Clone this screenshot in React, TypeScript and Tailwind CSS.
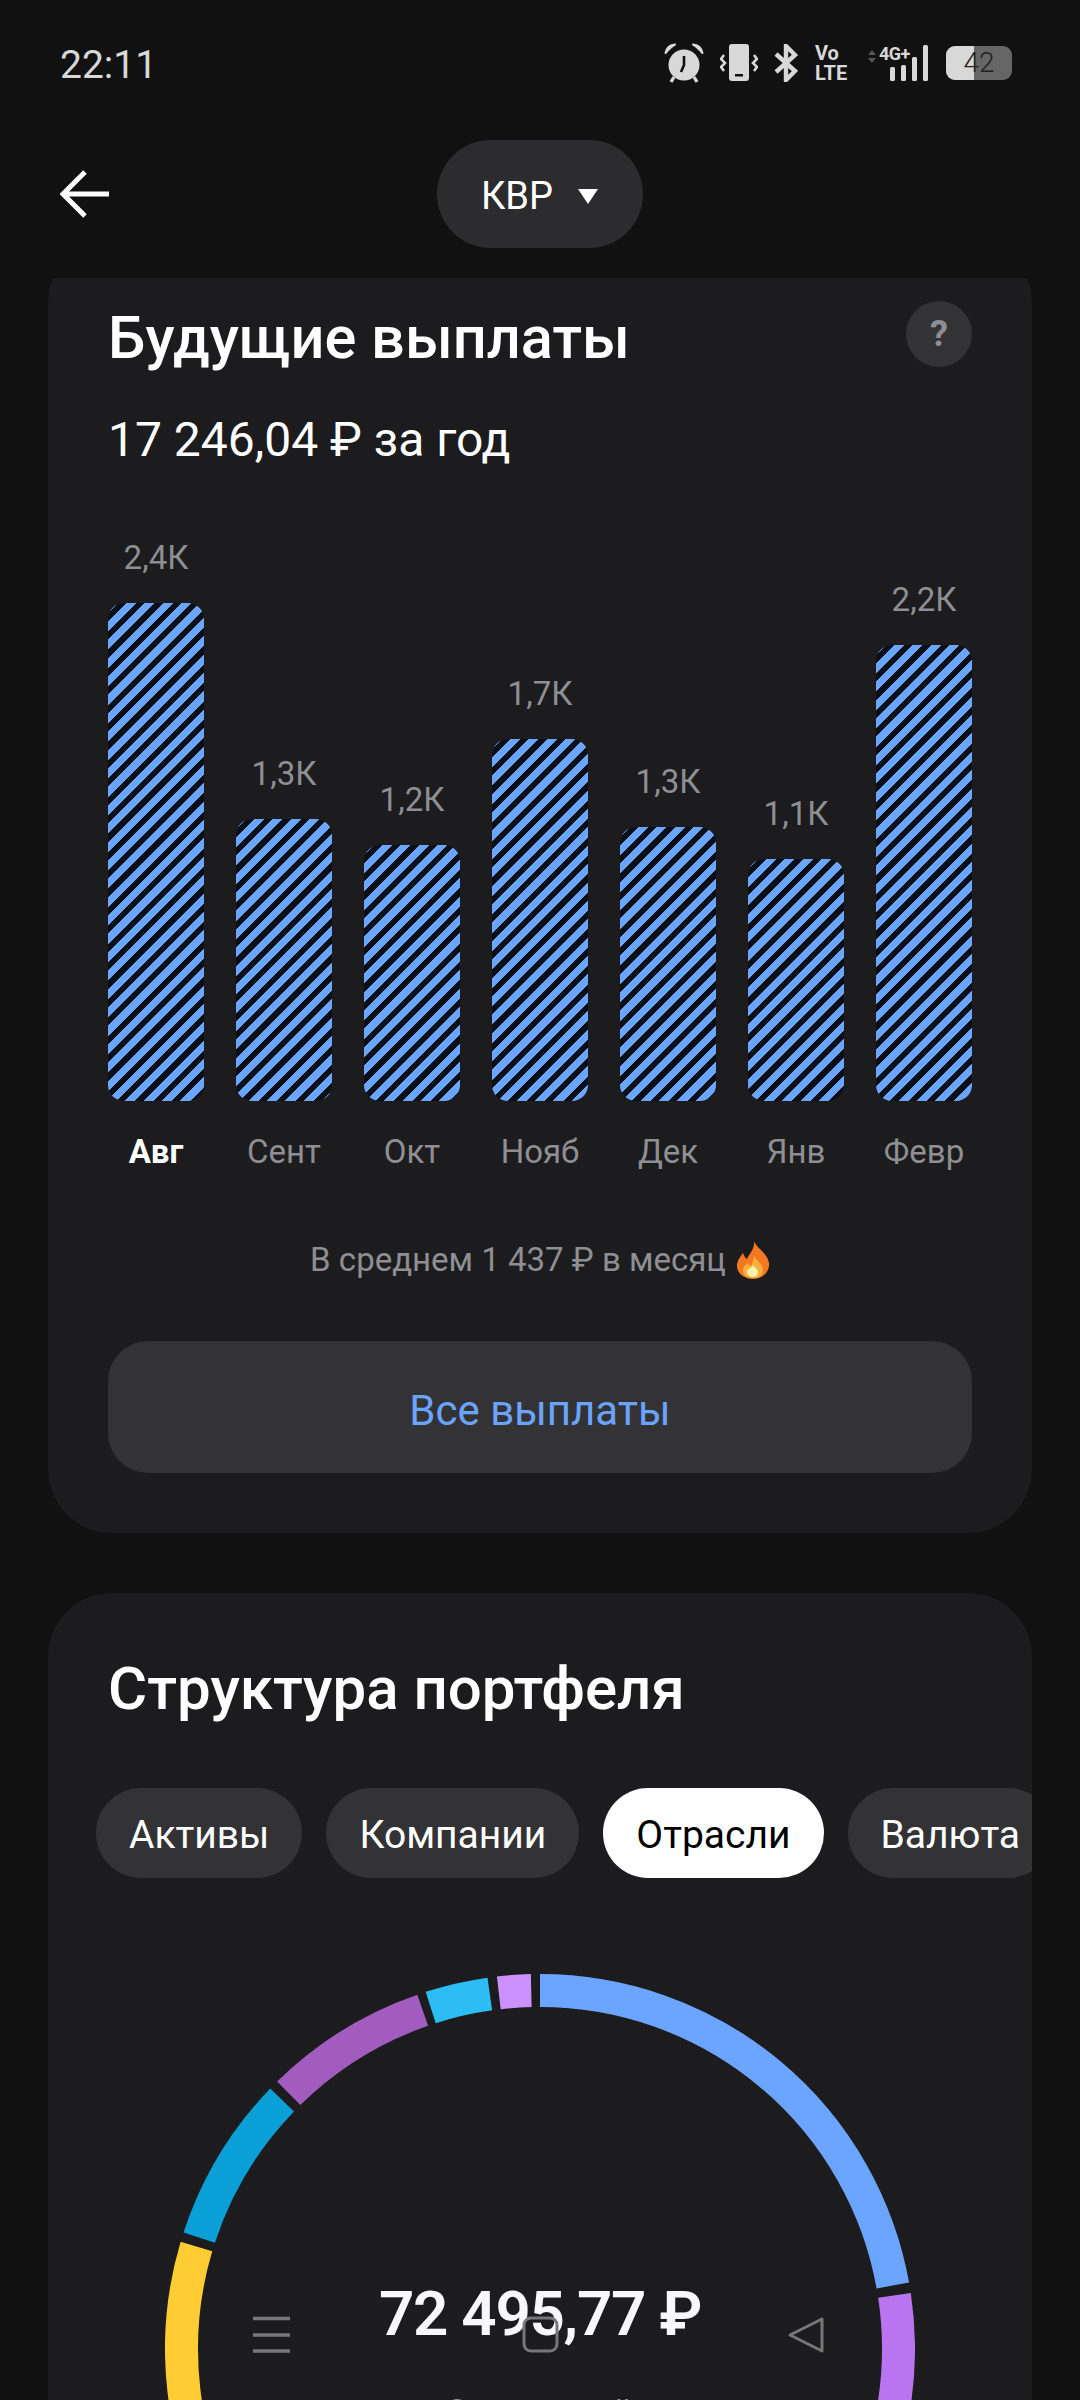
const payouts = [
  { month: "Авг", label: "2,4К", height: 498, active: true },
  { month: "Сент", label: "1,3К", height: 282 },
  { month: "Окт", label: "1,2К", height: 256 },
  { month: "Нояб", label: "1,7К", height: 362 },
  { month: "Дек", label: "1,3К", height: 274 },
  { month: "Янв", label: "1,1К", height: 242 },
  { month: "Февр", label: "2,2К", height: 456 },
];

const tabs = ["Активы", "Компании", "Отрасли", "Валюта"];

const segments = [
  { from: 0, to: 79.8, color: "#6ba5ff" },
  { from: 81.4, to: 120, color: "#bb74f0" },
  { from: -120, to: -73.4, color: "#ffcc33" },
  { from: -71.9, to: -46, color: "#0b9fd8" },
  { from: -44.5, to: -19.1, color: "#a25cc0" },
  { from: -17.75, to: -8.05, color: "#2dbdf5" },
  { from: -6.6, to: -1.4, color: "#cc90ff" },
];

function arcPath(from: number, to: number) {
  const r = 358.5;
  const point = (deg: number) => {
    const rad = (deg * Math.PI) / 180;
    return `${375 + r * Math.sin(rad)} ${375 - r * Math.cos(rad)}`;
  };
  return `M ${point(from)} A ${r} ${r} 0 ${to - from > 180 ? 1 : 0} 1 ${point(to)}`;
}

function StatusIcons() {
  return (
    <div className="flex items-center text-[#d8d8d8]">
      <svg width="40" height="40" viewBox="0 0 40 40" className="mr-[16px]" fill="none">
        <circle cx="20" cy="22" r="15.5" fill="#d8d8d8" />
        <path d="M20 13v9l-3 7" stroke="#111112" strokeWidth="2.6" />
        <path d="M1.5 10C2 5 6 1.5 11 1.5 8 3 4.5 6.5 1.5 10zM38.5 10C38 5 34 1.5 29 1.5 32 3 35.5 6.5 38.5 10z" fill="#d8d8d8" stroke="#d8d8d8" strokeWidth="2" strokeLinejoin="round" />
        <path d="M10 34l-3 5M30 34l3 5" stroke="#d8d8d8" strokeWidth="3.4" />
      </svg>
      <svg width="38" height="38" viewBox="0 0 38 38" className="mr-[16px]" fill="none">
        <rect x="9" y="0" width="20" height="37" rx="3" fill="#d8d8d8" />
        <rect x="15" y="30" width="8" height="2.5" fill="#111112" />
        <path d="M4 11l-3 4 4 4-4 4 3 4M34 11l3 4-4 4 4 4-3 4" stroke="#d8d8d8" strokeWidth="2.6" />
      </svg>
      <svg width="24" height="38" viewBox="0 0 24 38" className="mr-[17px]" fill="none">
        <path d="M2 10 21 27 12 36V2l9 9L2 28" stroke="#d8d8d8" strokeWidth="4.4" />
      </svg>
      <div className="mr-[17px] flex w-[35px] flex-col text-[20px] leading-[20px] font-bold">
        <span>Vo</span>
        <span>LTE</span>
      </div>
      <div className="relative mr-[16px] h-[38px] w-[63px]">
        <svg width="63" height="38" viewBox="0 0 63 38" fill="none">
          <path d="M1 11 5 6l4 5zM1 14h8l-4 5z" fill="#555" />
          <rect x="23" y="23" width="5" height="14" rx="1.5" fill="#d8d8d8" />
          <rect x="34" y="21" width="5" height="16" rx="1.5" fill="#d8d8d8" />
          <rect x="45" y="13" width="5" height="24" rx="1.5" fill="#d8d8d8" />
          <rect x="56" y="1" width="5" height="36" rx="1.5" fill="#d8d8d8" />
        </svg>
        <span className="absolute left-[12px] top-[1px] text-[18px] leading-[18px] font-bold tracking-[-0.5px]">
          4G+
        </span>
      </div>
      <div className="relative flex h-[34px] w-[66px] items-center justify-center overflow-hidden rounded-[9px] bg-[#666]">
        <div className="absolute inset-y-0 left-0 w-[28px] bg-[#d8d8d8]" />
        <span className="relative text-[28px] leading-none font-light text-[#222]">42</span>
      </div>
    </div>
  );
}

function Flame() {
  return (
    <svg width="34" height="38" viewBox="0 0 34 38" className="ml-[10px]">
      <path
        d="M18 0c2 7 13 11 15 22 1 9-7 16-16 16S0 32 1 23c1-5 4-8 6-11 1 3 2 5 4 6 2-5 8-10 7-18z"
        fill="#f4781f"
      />
      <path d="M18 14c1 5 9 8 9 16 0 4-4 7-10 7s-10-3-10-7c0-4 2-6 5-8 1 2 2 2 3 3 1-3 3-6 3-11z" fill="#fbb03b" />
      <path d="M17 24c1 2 5 4 5 7 0 3-2 5-5 5s-6-2-6-5c0-3 5-4 6-7z" fill="#fff0b0" />
    </svg>
  );
}

function PayoutsCard() {
  return (
    <section className="-mt-[39px] rounded-[64px] bg-[#1c1c1e] px-[60px] pb-[60px] pt-[61px]">
      <div className="flex items-start justify-between">
        <h2 className="text-[59.5px] leading-[76px] font-medium text-white">Будущие выплаты</h2>
        <div className="mt-[1px] grid size-[66px] place-items-center rounded-full bg-[#333335] text-[36px] font-bold text-[#8e8e93]">
          ?
        </div>
      </div>
      <p className="mt-[34px] text-[48px] leading-[60px] text-white">17 246,04 ₽ за год</p>

      <div className="flex h-[631px] items-end justify-between">
        {payouts.map((item) => (
          <div key={item.month} className="flex w-[96px] flex-col items-center">
            <span className="mb-[25px] whitespace-nowrap text-[33px] leading-[40px] text-[#8e8e93]">
              {item.label}
            </span>
            <div
              className="w-full rounded-[16px] bg-[repeating-linear-gradient(135deg,#6aa5ff_0,#6aa5ff_7.2px,#0a0f18_7.2px,#0a0f18_13px)]"
              style={{ height: item.height }}
            />
          </div>
        ))}
      </div>

      <div className="mt-[31px] flex justify-between">
        {payouts.map((item) => (
          <span
            key={item.month}
            className={
              item.active
                ? "w-[96px] text-center text-[33px] leading-[40px] font-bold text-white"
                : "w-[96px] text-center text-[33px] leading-[40px] text-[#8e8e93]"
            }
          >
            {item.month}
          </span>
        ))}
      </div>

      <div className="mt-[68px] flex h-[40px] items-center justify-center text-[33px] text-[#8e8e93]">
        В среднем 1 437 ₽ в месяц
        <Flame />
      </div>

      <button className="mt-[61px] h-[132px] w-full rounded-[40px] bg-[#333335] pt-[6px] text-[42px] text-[#6ba4ff]">
        Все выплаты
      </button>
    </section>
  );
}

function StructureCard() {
  return (
    <section className="mt-[60px] overflow-hidden rounded-t-[64px] bg-[#1c1c1e] pt-[58px]">
      <h2 className="px-[60px] text-[60px] leading-[76px] font-medium text-white">
        Структура портфеля
      </h2>
      <div className="mt-[61px] flex gap-[24px] pl-[48px]">
        {tabs.map((tab) => (
          <span
            key={tab}
            className={
              tab === "Отрасли"
                ? "flex h-[90px] shrink-0 items-center rounded-full bg-white px-[33px] pt-[5px] text-[39px] text-black"
                : "flex h-[90px] shrink-0 items-center rounded-full bg-[#333335] px-[33px] pt-[5px] text-[39px] text-white"
            }
          >
            {tab}
          </span>
        ))}
      </div>
      <div className="relative mx-auto mt-[96px] h-[750px] w-[750px]">
        <svg width="750" height="750" viewBox="0 0 750 750" fill="none">
          {segments.map((s) => (
            <path key={s.from} d={arcPath(s.from, s.to)} stroke={s.color} strokeWidth="33" />
          ))}
        </svg>
        <div className="absolute inset-x-0 top-[300px] flex flex-col items-center">
          <span className="text-[62px] leading-[80px] font-semibold tracking-[-1.3px] text-[#f8f8fa]">
            72 495,77 ₽
          </span>
          <span className="mt-[36px] text-[36px] leading-[46px] text-[#8e8e93]">8 отраслей</span>
        </div>
      </div>
    </section>
  );
}

function NavOverlay() {
  return (
    <div className="pointer-events-none absolute inset-x-0 top-[2315px] h-[40px]">
      <svg width="1080" height="40" viewBox="0 0 1080 40" fill="none" stroke="#777" strokeWidth="3.5">
        <path d="M253 3.5h37M253 20h37M253 36h37" />
        <rect x="524" y="3" width="33" height="33" rx="7" strokeWidth="3" />
        <path d="M822 4 790 20l32 16z" strokeWidth="3" strokeLinejoin="round" />
      </svg>
    </div>
  );
}

export default function App() {
  return (
    <div className="relative flex h-[2400px] w-[1080px] flex-col overflow-hidden bg-[#111112] [font-family:Roboto,sans-serif]">
      <header className="flex h-[126px] shrink-0 items-center justify-between pl-[60px] pr-[68px]">
        <span className="pt-[5px] text-[39px] text-[#d8d8d8]">22:11</span>
        <StatusIcons />
      </header>

      <div className="mb-[30px] mt-[14px] grid shrink-0 grid-cols-[1fr_auto_1fr] items-center px-[60px]">
        <svg width="50" height="50" viewBox="0 0 50 50" fill="none" stroke="white" strokeWidth="5">
          <path d="M49 25H5M25 3 3 25l22 22" />
        </svg>
        <div className="flex h-[108px] w-[206px] items-center justify-center gap-[24px] rounded-full bg-[#2c2c2e] pt-[4px] text-[38px] text-white">
          КВР
          <svg width="22" height="18" viewBox="0 0 22 18" fill="white">
            <path d="M1 2h20L11 17z" />
          </svg>
        </div>
        <div />
      </div>

      <main className="min-h-0 flex-1 overflow-hidden px-[48px]">
        <PayoutsCard />
        <StructureCard />
      </main>

      <NavOverlay />
    </div>
  );
}
